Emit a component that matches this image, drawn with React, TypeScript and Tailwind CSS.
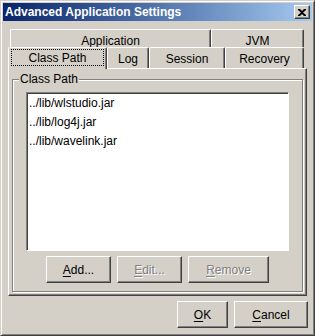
import React from "react";

const raised =
  "border border-t-white border-l-white border-r-[#404040] border-b-[#404040] shadow-[inset_-1px_-1px_0_#808080]";

function Mn({ ch, rest, disabled }: { ch: string; rest: string; disabled?: boolean }) {
  return (
    <span
      className={
        disabled ? "text-[#808080] [text-shadow:1px_1px_0_#ffffff]" : "text-black"
      }
    >
      <span className="underline underline-offset-[2px]">{ch}</span>
      {rest}
    </span>
  );
}

function Button({ w, children }: { w: string; children: React.ReactNode }) {
  return (
    <button className={`${raised} ${w} h-[27px] bg-[#d4d0c8] flex items-center justify-center text-[12px]`}>
      {children}
    </button>
  );
}

function Tab({ w, label, pt }: { w: string; label: string; pt: string }) {
  return (
    <div
      className={`${w} ${pt} h-full flex items-center justify-center border-t border-l border-r border-t-white border-l-white border-r-[#404040] shadow-[inset_-1px_0_0_#808080] rounded-tl-[2px] rounded-tr-[2px] text-[12px] bg-[#d4d0c8]`}
    >
      {label}
    </div>
  );
}

export default function App() {
  const items = ["../lib/wlstudio.jar", "../lib/log4j.jar", "../lib/wavelink.jar"];

  return (
    <div className="w-[315px] h-[336px] bg-[#d4d0c8] border border-t-[#d4d0c8] border-l-[#d4d0c8] border-r-[#404040] border-b-[#404040] shadow-[inset_1px_1px_0_#ffffff,inset_-1px_-1px_0_#808080] p-[2px] flex flex-col font-['Liberation_Sans',Arial,sans-serif] text-black select-none">
      {/* title bar */}
      <div className="h-[18px] flex items-center bg-linear-to-r from-[#0a246a] to-[#a6caf0] pl-[2px] pr-[2px]">
        <span className="flex-1 text-white font-bold text-[12px] leading-none">
          Advanced Application Settings
        </span>
        <div className={`${raised} w-[16px] h-[14px] bg-[#d4d0c8] flex items-center justify-center`}>
          <svg width="8" height="7" viewBox="0 0 8 7">
            <path d="M0 0h2l2 2 2-2h2v1L5 3.5 8 6v1H6L4 5 2 7H0V6l3-2.5L0 1z" fill="#000" />
          </svg>
        </div>
      </div>

      {/* tabs */}
      <div className="mt-[8px] mx-[5px] flex flex-col">
        <div className="h-[18px] flex px-[2px]">
          <Tab w="w-[201px]" label="Application" pt="pt-[5px]" />
          <Tab w="w-[93px]" label="JVM" pt="pt-[5px]" />
        </div>
        <div className="h-[21px] flex items-end px-[2px] relative z-10">
          <div className="w-[99px] h-[22px] -ml-[2px] -mb-px flex items-center justify-center border-t border-l border-r border-t-white border-l-white border-r-[#404040] shadow-[inset_-1px_0_0_#808080] rounded-tl-[2px] rounded-tr-[2px] bg-[#d4d0c8] px-[2px] pt-[1px] pb-[3px]">
            <div className="w-full h-full border border-dotted border-black flex items-center justify-center text-[12px]">
              Class Path
            </div>
          </div>
          <Tab w="w-[42px]" label="Log" pt="pt-[2px]" />
          <Tab w="w-[76px]" label="Session" pt="pt-[2px]" />
          <Tab w="w-[79px]" label="Recovery" pt="pt-[2px]" />
        </div>
        {/* panel */}
        <div className="h-[228px] border border-t-white border-l-white border-r-[#404040] border-b-[#404040] shadow-[inset_-1px_-1px_0_#808080] flex flex-col pt-[3px] pl-[3px] pr-[3px] pb-[3px]">
          <fieldset className="flex-1 border border-[#808080] shadow-[inset_1px_1px_0_#ffffff,1px_1px_0_#ffffff] px-[13px] pb-[7px] flex flex-col min-h-0">
            <legend className="-ml-[7px] px-[1px] text-[12px] leading-[14px] bg-[#d4d0c8]">Class Path</legend>
            <div className="mt-[6px] h-[159px] bg-white border border-t-[#808080] border-l-[#808080] border-r-white border-b-white shadow-[inset_1px_1px_0_#404040] pt-[1px] pl-[2px]">
              {items.map((it) => (
                <div key={it} className="h-[19px] leading-[19px] text-[12px]">
                  {it}
                </div>
              ))}
            </div>
            <div className="mt-[5px] flex justify-center gap-[6px]">
              <Button w="w-[65px]">
                <Mn ch="A" rest="dd..." />
              </Button>
              <Button w="w-[65px]">
                <Mn ch="E" rest="dit..." disabled />
              </Button>
              <Button w="w-[81px]">
                <Mn ch="R" rest="emove" disabled />
              </Button>
            </div>
          </fieldset>
        </div>
      </div>

      {/* dialog buttons */}
      <div className="mt-[5px] mr-[4px] flex justify-end gap-[6px]">
        <Button w="w-[51px]">
          <Mn ch="O" rest="K" />
        </Button>
        <Button w="w-[74px]">
          <Mn ch="C" rest="ancel" />
        </Button>
      </div>
    </div>
  );
}
